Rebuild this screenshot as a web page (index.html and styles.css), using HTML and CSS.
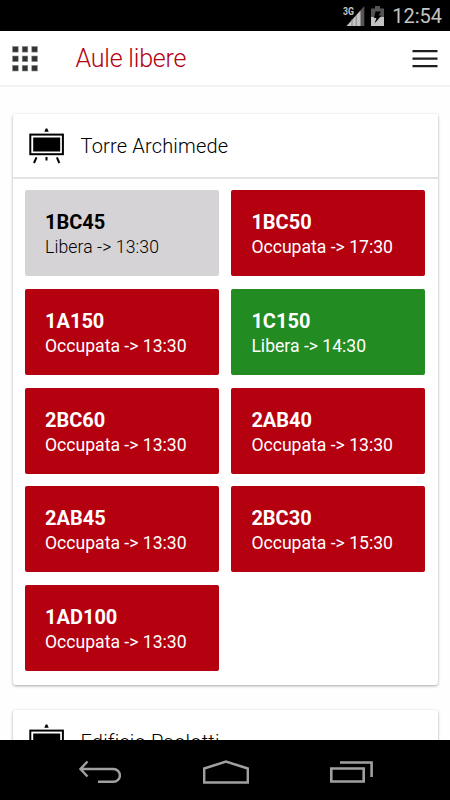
FILE: index.html
```html
<!DOCTYPE html>
<html lang="it">
<head>
    <meta charset="utf-8">
    <meta name="viewport" content="width=device-width, initial-scale=1.0">
    <title>Aule libere</title>
    <link rel="stylesheet" href="styles.css">
</head>
<body>
    <!-- status bar -->
    <div class="statusBar">
        <svg class="signalIcon" width="22" height="22" viewBox="0 0 22 22">
            <path d="M21.3 1V21H4Z" fill="#555"/>
            <path d="M17.5 5.5V21H3.5Z" fill="#c4c4c4"/>
            <path d="M9 14V21M13.2 10V21" stroke="#777" stroke-width="0.8"/>
            <rect x="0" y="0" width="12.2" height="11" fill="#000"/>
            <text x="0" y="9.8" class="netLabel" textLength="11" lengthAdjust="spacingAndGlyphs">3G</text>
        </svg>
        <svg class="batteryIcon" width="13" height="20" viewBox="0 0 13 20">
            <path d="M4 0H9V2.5H13V11H0V2.5H4Z" fill="#555"/>
            <rect x="0" y="11" width="13" height="9" fill="#c4c4c4"/>
            <path d="M4.5 5.5H10L7.5 9.5H10.5L3.5 17.5L5.5 12H3Z" fill="#000"/>
        </svg>
        <span class="clock">12:54</span>
    </div>

    <!-- header -->
    <header class="topBar">
        <svg class="gridIcon" width="26" height="26" viewBox="0 0 26 26" fill="#303433" stroke="#8c8e8d" stroke-width="0.6">
            <rect x="0.6" y="0.5" width="5.6" height="5.6"/>
            <rect x="10.2" y="0.5" width="5.6" height="5.6"/>
            <rect x="19.8" y="0.5" width="5.6" height="5.6"/>
            <rect x="0.6" y="10" width="5.6" height="5.6"/>
            <rect x="10.2" y="10" width="5.6" height="5.6"/>
            <rect x="19.8" y="10" width="5.6" height="5.6"/>
            <rect x="0.6" y="19.4" width="5.6" height="5.6"/>
            <rect x="10.2" y="19.4" width="5.6" height="5.6"/>
            <rect x="19.8" y="19.4" width="5.6" height="5.6"/>
        </svg>
        <h1 class="pageTitle">Aule libere</h1>
        <svg class="menuIcon" width="26" height="20" viewBox="0 0 26 20">
            <path d="M0.5 2.2H25.5M0.5 9.7H25.5M0.5 17.2H25.5" stroke="#1c1f1c" stroke-width="2.3"/>
        </svg>
    </header>

    <!-- lista edifici -->
    <main class="content">
        <section class="card">
            <div class="cardHeader">
                <svg class="boardIcon" width="36" height="36" viewBox="0 0 36 36">
                    <path d="M17.7 0.5H19.3L20.7 3.8H16.3Z"/>
                    <rect x="2.3" y="6.6" width="32.6" height="19.6" fill="#fff" stroke="#000" stroke-width="2"/>
                    <rect x="5.2" y="9.5" width="27" height="14"/>
                    <path d="M8.5 29.3L6 35M18.5 29V32.5M28.9 29.3L31.3 35" fill="none" stroke="#000" stroke-width="2"/>
                </svg>
                <h2 class="cardTitle">Torre Archimede</h2>
            </div>
            <div class="rooms">
                <div class="room closing"><b>1BC45</b><span>Libera -&gt; 13:30</span></div>
                <div class="room busy"><b>1BC50</b><span>Occupata -&gt; 17:30</span></div>
                <div class="room busy"><b>1A150</b><span>Occupata -&gt; 13:30</span></div>
                <div class="room free"><b>1C150</b><span>Libera -&gt; 14:30</span></div>
                <div class="room busy"><b>2BC60</b><span>Occupata -&gt; 13:30</span></div>
                <div class="room busy"><b>2AB40</b><span>Occupata -&gt; 13:30</span></div>
                <div class="room busy"><b>2AB45</b><span>Occupata -&gt; 13:30</span></div>
                <div class="room busy"><b>2BC30</b><span>Occupata -&gt; 15:30</span></div>
                <div class="room busy"><b>1AD100</b><span>Occupata -&gt; 13:30</span></div>
            </div>
        </section>

        <section class="card">
            <div class="cardHeader">
                <svg class="boardIcon" width="36" height="36" viewBox="0 0 36 36">
                    <path d="M17.7 0.5H19.3L20.7 3.8H16.3Z"/>
                    <rect x="2.3" y="6.6" width="32.6" height="19.6" fill="#fff" stroke="#000" stroke-width="2"/>
                    <rect x="5.2" y="9.5" width="27" height="14"/>
                    <path d="M8.5 29.3L6 35M18.5 29V32.5M28.9 29.3L31.3 35" fill="none" stroke="#000" stroke-width="2"/>
                </svg>
                <h2 class="cardTitle">Edificio Paolotti</h2>
            </div>
        </section>
    </main>

    <!-- tasti di sistema -->
    <nav class="navBar">
        <svg width="42" height="24" viewBox="0 0 42 24" fill="none" stroke="#a0a0a0" stroke-width="2.4">
            <path d="M8.5 1.5L1.5 9L8.5 16.5M2 9H34.5A6.4 6.4 0 0 1 34.5 21.8H19"/>
        </svg>
        <svg width="46" height="24" viewBox="0 0 46 24" fill="none" stroke="#a0a0a0" stroke-width="2.4">
            <path d="M1.2 8.5L23 1.5L44.8 8.5V22.5H1.2Z"/>
        </svg>
        <svg width="43" height="22" viewBox="0 0 43 22" fill="none" stroke="#a0a0a0" stroke-width="2.6">
            <path d="M1.3 7.5H33.7V20.5H1.3ZM10 1.5H41.6V16"/>
        </svg>
    </nav>
</body>
</html>
```

FILE: styles.css
```css
* {
    box-sizing: border-box;
}

body {
    margin: 0;
    height: 100vh;
    display: flex;
    flex-direction: column;
    overflow: hidden;
    background-color: #fefefe;
    color: #000;
    font-family: Roboto, sans-serif;
}

.statusBar {
    flex: none;
    height: 31px;
    padding: 0 8px 0 0;
    display: flex;
    align-items: center;
    justify-content: flex-end;
    background-color: #000;
    color: #c4c4c4;
}

.signalIcon {
    margin-right: 6px;
}

.netLabel {
    font-size: 11px;
    font-weight: bold;
    fill: #c4c4c4;
}

.batteryIcon {
    margin-right: 8px;
}

.clock {
    font-size: 20px;
    line-height: 30px;
    padding-top: 1px;
}

.topBar {
    flex: none;
    height: 56px;
    padding: 1px 12px 0;
    display: flex;
    align-items: center;
    background-color: #fff;
    border-bottom: 2px solid #f2f2f2;
}

.pageTitle {
    flex: 1;
    margin: 0 0 0 37.5px;
    color: #b5000f;
    font-size: 25px;
    font-weight: 300;
    letter-spacing: -0.2px;
}

.content {
    flex: 1;
    min-height: 0;
    overflow: hidden;
    padding: 27px 12.5px 0;
}

.card {
    margin-bottom: 25px;
    background-color: #fff;
    border-radius: 3px;
    box-shadow: 0 1px 3px rgba(0,0,0,0.35);
}

.cardHeader {
    height: 65px;
    padding-left: 15px;
    display: flex;
    align-items: center;
    border-bottom: 2px solid #e4e4e4;
}

.cardTitle {
    margin: 0 0 0 17px;
    font-size: 20px;
    font-weight: 300;
    letter-spacing: 0.18px;
}

.rooms {
    display: grid;
    grid-template-columns: 1fr 1fr;
    grid-auto-rows: 86px;
    gap: 12.75px;
    padding: 11px 12.5px 14px;
}

.room {
    padding: 20px 20px 0;
    display: flex;
    flex-direction: column;
    border-radius: 2px;
    font-size: 17.6px;
    line-height: 24px;
}

.room b {
    font-size: 20px;
}

.room span {
    padding-top: 1px;
}

.closing {
    background-color: #d5d3d6;
    color: #000;
}

.closing span {
    font-weight: 300;
    letter-spacing: 0.1px;
}

.busy {
    background-color: #b5000f;
    color: #fff;
}

.free {
    background-color: #228b22;
    color: #fff;
}

.navBar {
    flex: none;
    height: 60px;
    padding: 3px 77px 0 79px;
    display: flex;
    align-items: center;
    justify-content: space-between;
    background-color: #000;
}
```
